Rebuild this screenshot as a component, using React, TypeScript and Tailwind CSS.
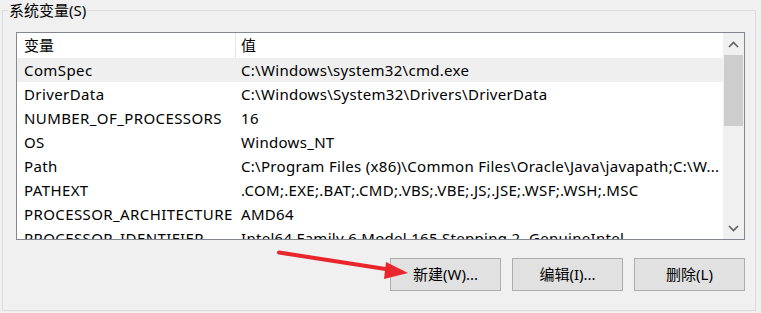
const rows: [string, string][] = [
  ["ComSpec", "C:\\Windows\\system32\\cmd.exe"],
  ["DriverData", "C:\\Windows\\System32\\Drivers\\DriverData"],
  ["NUMBER_OF_PROCESSORS", "16"],
  ["OS", "Windows_NT"],
  ["Path", "C:\\Program Files (x86)\\Common Files\\Oracle\\Java\\javapath;C:\\W..."],
  ["PATHEXT", ".COM;.EXE;.BAT;.CMD;.VBS;.VBE;.JS;.JSE;.WSF;.WSH;.MSC"],
  ["PROCESSOR_ARCHITECTURE", "AMD64"],
  ["PROCESSOR_IDENTIFIER", "Intel64 Family 6 Model 165 Stepping 2, GenuineIntel"],
];

function Chevron({ up }: { up?: boolean }) {
  return (
    <svg width="11" height="7" viewBox="0 0 11 7">
      <path
        d={up ? "M1 6 L5.5 1.5 L10 6" : "M1 1 L5.5 5.5 L10 1"}
        fill="none"
        stroke="#606060"
        strokeWidth="1.6"
      />
    </svg>
  );
}

export default function App() {
  return (
    <div className="relative h-[313px] w-[761px] overflow-hidden bg-[#f0f0f0] pl-[2px] font-['Noto_Sans','Noto_Sans_CJK_SC',sans-serif] text-[15px] text-black">
      <fieldset className="flex h-[311px] w-[754px] flex-col border border-[#dcdcdc]">
        <legend className="ml-[5px] px-[1px] leading-[20px]">系统变量(S)</legend>

        <div className="ml-[13px] mt-[12px] flex h-[208px] w-[729px] border border-[#828790] bg-white">
          <div className="w-[706px] overflow-hidden">
            <div className="flex h-[25px] items-center">
              <div className="w-[218px] pl-[7px] leading-[25px]">变量</div>
              <div className="h-full w-px bg-[#e5e5e5]" />
              <div className="pl-[5px] leading-[25px]">值</div>
            </div>
            {rows.map(([name, value], i) => (
              <div key={name} className={`flex h-[24px] items-center whitespace-nowrap leading-[24px] tracking-[0.3px] ${i === 0 ? "bg-[#efefef]" : ""}`}>
                <div className="w-[219px] shrink-0 pl-[7px] tracking-[0.4px]">{name}</div>
                <div className="pl-[5px]">{value}</div>
              </div>
            ))}
          </div>
          <div className="flex w-[21px] flex-col bg-[#f0f0f0]">
            <div className="flex h-[22px] items-center justify-center">
              <Chevron up />
            </div>
            <div className="mx-auto h-[71px] w-[19px] bg-[#cdcdcd]" />
            <div className="flex-1" />
            <div className="flex h-[22px] items-center justify-center">
              <Chevron />
            </div>
          </div>
        </div>

        <div className="mr-[10px] mt-[18px] flex justify-end gap-[11px]">
          <button className="h-[33px] w-[111px] border border-[#adadad] bg-[#e1e1e1]">新建(W)...</button>
          <button className="h-[33px] w-[111px] border border-[#adadad] bg-[#e1e1e1]">编辑(I)...</button>
          <button className="h-[33px] w-[111px] border border-[#adadad] bg-[#e1e1e1]">删除(L)</button>
        </div>
      </fieldset>

      <svg className="pointer-events-none absolute left-0 top-0" width="761" height="313">
        <line x1="279" y1="252.5" x2="392" y2="270" stroke="#e8262b" strokeWidth="4" strokeLinecap="round" />
        <polygon points="408,273 386,262 384,279" fill="#e8262b" />
      </svg>
    </div>
  );
}
